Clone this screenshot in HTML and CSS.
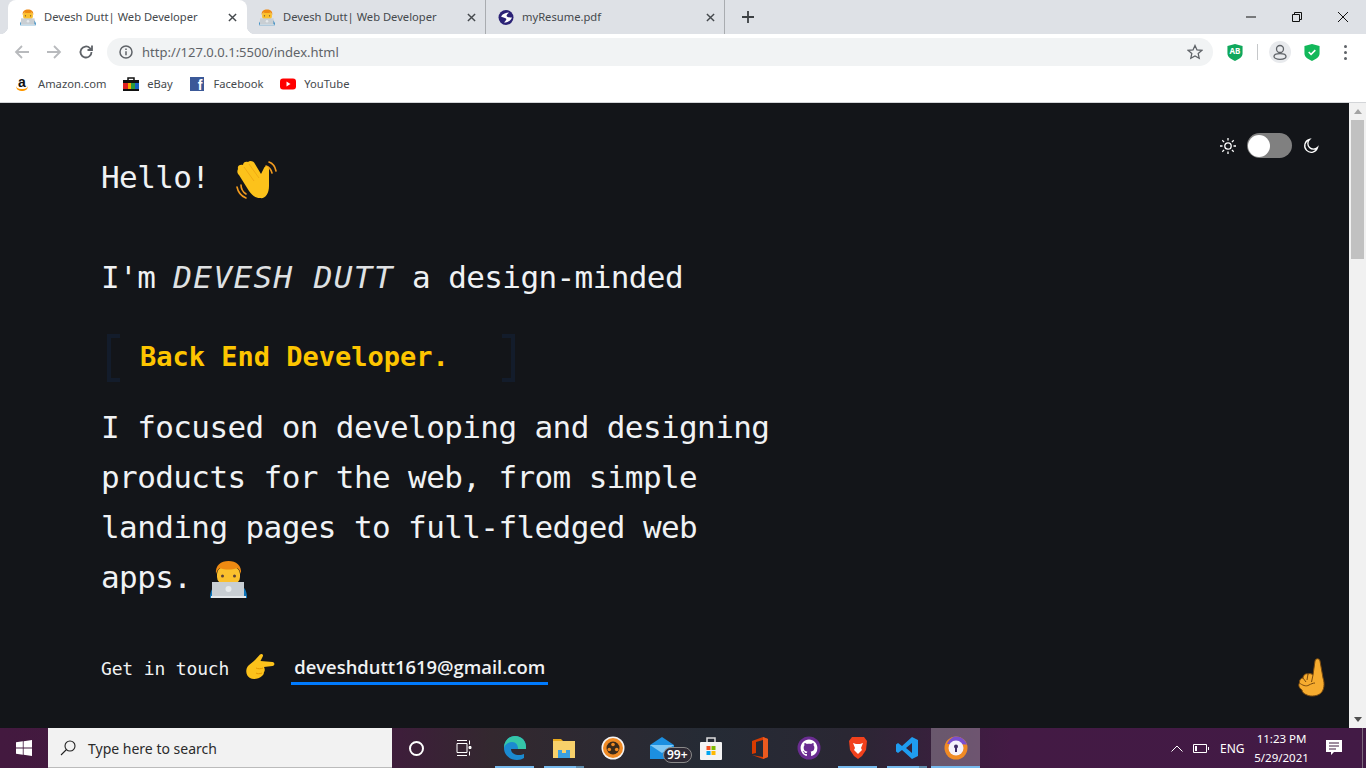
FILE: index.html
```html
<!DOCTYPE html>
<html lang="en">
<head>
<meta charset="UTF-8">
<meta name="viewport" content="width=device-width, initial-scale=1.0">
<title>Devesh Dutt| Web Developer</title>
<link rel="stylesheet" href="styles.css">
</head>
<body>

<svg class="defs" width="0" height="0">
    <symbol id="dev" viewBox="0 0 37 40">
        <path d="M0 38c0-6 2-10 5-12h27c3 2 5 6 5 12z" fill="#0d74b8"/>
        <rect x="7" y="7" width="23" height="17" rx="7" fill="#fbc02d"/>
        <path d="M6 14C5 5 11 1 18.500 1S32 5 31 14c-1-3-2-5-4-6-5 2-12 2-17 0-2 1-3 3-4 6z" fill="#ee8a12"/>
        <circle cx="12.500" cy="16" r="1.500" fill="#5d4037"/>
        <circle cx="24.500" cy="16" r="1.500" fill="#5d4037"/>
        <rect x="2" y="22" width="32" height="15" fill="#c8ced3"/>
        <rect x="1" y="36" width="35" height="2" fill="#e3e7ea"/>
        <circle cx="18.500" cy="29" r="3" fill="#e6eaed"/>
    </symbol>
    <symbol id="wave" viewBox="0 0 42 40">
        <g fill="none" stroke="#f19a1f" stroke-width="1.600" stroke-linecap="round">
            <path d="M31 6c3 1 5 3 6 7"/>
            <path d="M34 2c3 1 6 4 7 9"/>
            <path d="M6 25c0 4 2 7 5 9"/>
            <path d="M2 27c1 5 4 9 9 11"/>
        </g>
        <path d="M3 9c-1-3 2-5 5-4 0-3 3-4 5-3 2-2 6-1 7 2l6 10 3-6c1-3 5-2 5 1l0 17c0 8-4 13-9 12-5 0-8-3-11-7L4 15c-2-2-2-4-1-6z" fill="#fcc21b"/>
        <path d="M9 7l10 14M14 4l10 14" stroke="#eda512" stroke-width=".8" fill="none"/>
    </symbol>
    <symbol id="point" viewBox="0 0 30 27">
        <path d="M3 13c2-2 5-4 7-6l5-5.500c2-1.500 4 .5 2.500 2.500l-2 4 12 1c2.500.5 2.500 3.500 0 4L19 14c1 2 1 4 0 5 0 2-1 3-2 4-3 3-9 4-12 2-4-2-5-8-2-12z" fill="#fcc21b"/>
        <path d="M18 15c-2 1-5 1-7 0M17 20c-2 1-5 1-6 0" stroke="#e59600" stroke-width="1" fill="none"/>
    </symbol>
    <symbol id="up" viewBox="0 0 28 39">
        <path d="M15 17l2-14c.5-3 4.500-3 5 0l3 17c2 6 1 12-2 15s-10 4-14 2c-3-1-5-3-5-5-3-2-4-5-2.500-7C1 22 3 20 5 20c0-3 3-5 5-4 2-1 4 0 5 1z" fill="#f7ac2f" stroke="#7a4a0e" stroke-width="1"/>
        <path d="M15 17l-1.500 7M10 16l-1 6M5 20l3 4M1.500 25c2.500 2 6.500 4 9.500 2 2-1 4-2 6-2" fill="none" stroke="#7a4a0e" stroke-width="1"/>
    </symbol>
</svg>

<div class="tabstrip">
    <div class="tab tab-active">
        <svg class="favicon"><use href="#dev"/></svg>
        <span class="tab-title">Devesh Dutt| Web Developer</span>
        <svg class="tab-close" viewBox="0 0 10 10"><path d="M1 1l8 8M9 1l-8 8"/></svg>
    </div>
    <div class="tab">
        <svg class="favicon"><use href="#dev"/></svg>
        <span class="tab-title">Devesh Dutt| Web Developer</span>
        <svg class="tab-close" viewBox="0 0 10 10"><path d="M1 1l8 8M9 1l-8 8"/></svg>
    </div>
    <div class="tab">
        <svg class="favicon" viewBox="0 0 16 16">
            <circle cx="8" cy="8" r="7.500" fill="#2b2276"/>
            <path d="M3 7c2-3 5-4 8-4-2 2-3 3-2 4s4 1 5 1c-1 3-4 5-8 5 2-2 3-3 2-4S4 8 3 7z" fill="#fff"/>
        </svg>
        <span class="tab-title">myResume.pdf</span>
        <svg class="tab-close" viewBox="0 0 10 10"><path d="M1 1l8 8M9 1l-8 8"/></svg>
    </div>
    <svg class="new-tab" viewBox="0 0 12 12"><path d="M6 0v12M0 6h12"/></svg>
    <div class="window-controls">
        <span class="win-btn"><svg viewBox="0 0 10 10"><path d="M0 5h10"/></svg></span>
        <span class="win-btn"><svg viewBox="0 0 10 10"><path d="M.5 2.500h7v7h-7zM2.500 2.500v-2h7v7h-2"/></svg></span>
        <span class="win-btn"><svg viewBox="0 0 10 10"><path d="M0 0l10 10M10 0L0 10"/></svg></span>
    </div>
</div>

<div class="toolbar">
    <span class="tool-btn"><svg viewBox="0 0 16 16" class="ico-off"><path d="M15 8H2M8 2L2 8l6 6"/></svg></span>
    <span class="tool-btn"><svg viewBox="0 0 16 16" class="ico-off"><path d="M1 8h13M8 2l6 6-6 6"/></svg></span>
    <span class="tool-btn"><svg viewBox="0 0 16 16" class="ico-on"><path d="M13.500 8a5.500 5.500 0 1 1-1.600-3.900L14 6M14 1.500V6H9.500"/></svg></span>
    <div class="omnibox">
        <svg class="info-icon" viewBox="0 0 14 14"><circle cx="7" cy="7" r="6"/><path d="M7 6.200v4M7 3.500v1.500"/></svg>
        <span class="url">http://127.0.0.1:5500/index.html</span>
        <svg class="star-icon" viewBox="0 0 16 16"><path d="M8 1.500l2 4.400 4.800.5-3.600 3.200 1 4.700L8 12l-4.200 2.300 1-4.700L1.200 6.400 6 5.900z"/></svg>
    </div>
    <span class="tool-btn tool-first">
        <svg viewBox="0 0 16 18" class="ext"><path d="M0 2l8-2 8 2v8c0 4-4 6-8 8-4-2-8-4-8-8z" fill="#10a85c"/></svg>
        <span class="ext-text">AB</span>
    </span>
    <span class="tool-sep"></span>
    <span class="tool-btn"><span class="avatar">
        <svg viewBox="0 0 16 16" class="ico-on"><circle cx="8" cy="5" r="3.500"/><ellipse cx="8" cy="12.500" rx="6" ry="2.800"/></svg>
    </span></span>
    <span class="tool-btn">
        <svg viewBox="0 0 16 18" class="ext"><path d="M0 2l8-2 8 2v8c0 4-4 6-8 8-4-2-8-4-8-8z" fill="#12b85a"/><path d="M4.500 8.500l2.500 2.500 4.500-4.500" fill="none" stroke="#fff" stroke-width="1.600"/></svg>
    </span>
    <span class="tool-btn tool-menu"><span class="dots"><i></i><i></i><i></i></span></span>
</div>

<div class="bookmarks">
    <span class="bookmark">
        <span class="fav-amazon">a</span>
        Amazon.com
    </span>
    <span class="bookmark">
        <svg viewBox="0 0 16 16">
            <path d="M5 5V2h6v3" fill="none" stroke="#111" stroke-width="1.500"/>
            <rect y="4" width="16" height="3" fill="#111"/>
            <rect y="7" width="5" height="6" fill="#e02020"/>
            <rect x="5" y="7" width="3" height="6" fill="#f5a800"/>
            <rect x="8" y="7" width="4" height="6" fill="#2b9b3f"/>
            <rect x="12" y="7" width="4" height="6" fill="#1762c4"/>
            <rect y="13" width="16" height="2" fill="#111"/>
        </svg>
        eBay
    </span>
    <span class="bookmark">
        <span class="fav-facebook">f</span>
        Facebook
    </span>
    <span class="bookmark">
        <svg viewBox="0 0 16 16"><rect y="2.500" width="16" height="11" rx="3" fill="#f00"/><path d="M6.500 5.500l4 2.500-4 2.500z" fill="#fff"/></svg>
        YouTube
    </span>
</div>

<div class="viewport">
    <main class="page">
        <div class="theme-switch">
            <svg class="theme-icon" viewBox="0 0 16 16"><circle cx="8" cy="8" r="3.200"/><path d="M8 0v2.500M8 13.500V16M0 8h2.500M13.500 8H16M2.300 2.300l1.800 1.800M11.900 11.900l1.800 1.800M2.300 13.700l1.800-1.800M11.900 4.100l1.800-1.800"/></svg>
            <span class="switch-track"><span class="switch-knob"></span></span>
            <svg class="theme-icon" viewBox="0 0 16 16"><path d="M6.500 1.500a6.500 6.500 0 1 0 8 8 5.500 5.500 0 0 1-8-8z"/></svg>
        </div>

        <h1 class="line hello">Hello! <svg class="emoji-wave"><use href="#wave"/></svg></h1>
        <p class="line intro">I'm <em>DEVESH DUTT</em> a design-minded</p>
        <div class="role">
            <span class="bracket bracket-left"></span>
            <span class="role-text">Back End Developer.</span>
            <span class="bracket bracket-right"></span>
        </div>
        <p class="line about">I focused on developing and designing<br>products for the web, from simple<br>landing pages to full-fledged web<br>apps. <svg class="emoji-dev"><use href="#dev"/></svg></p>
        <div class="contact">
            <span class="contact-label">Get in touch</span>
            <svg class="emoji-point"><use href="#point"/></svg>
            <a class="email" href="#">deveshdutt1619@gmail.com</a>
        </div>

        <svg class="emoji-up"><use href="#up"/></svg>
    </main>
    <div class="scrollbar">
        <span class="arrow arrow-up"></span>
        <span class="thumb"></span>
        <span class="arrow arrow-down"></span>
    </div>
</div>

<footer class="taskbar">
    <span class="start">
        <svg viewBox="0 0 16 16"><path d="M0 2.300l6.800-1v6.300H0zM7.600 1.200L16 0v7.600H7.600zM0 8.400h6.800v6.300L0 13.700zM7.600 8.400H16V16l-8.400-1.200z" fill="#fff"/></svg>
    </span>
    <div class="search">
        <svg viewBox="0 0 16 16"><circle cx="10" cy="6" r="5"/><path d="M6.500 9.500L1 15"/></svg>
        <span>Type here to search</span>
    </div>
    <span class="task-item"><span class="cortana"></span></span>
    <span class="task-item">
        <svg viewBox="0 0 16 16" class="taskview"><path d="M1 3.500h10v9H1zM1 .5h10M1 15.500h10M13.500.5v4M13.500 11.500v4"/><path d="M13 6.500h2v2h-2z" fill="#fff"/></svg>
    </span>
    <span class="task-item task-open">
        <svg viewBox="0 0 24 24">
            <path d="M1 12C1 5 6 0 12 0c7 0 11 5 11 11v2H8c0 4 4 6 8 6 2 0 4-.5 5-1v4c-2 1-4 2-7 2C7 24 1 19 1 12z" fill="#1b8ad0"/>
            <path d="M1 12c1-4 5-6 8-6 4 0 6 3 6 7h8v-2C23 5 19 0 12 0 6 0 1 5 1 12z" fill="#35c6a8"/>
        </svg>
    </span>
    <span class="task-item task-open task-stacked">
        <svg viewBox="0 0 24 24">
            <path d="M1 3h8l2 2H1z" fill="#e8a91c"/>
            <rect x="1" y="5" width="22" height="17" fill="#f7d06a"/>
            <rect x="6" y="14" width="12" height="8" fill="#3aa0e0"/>
            <rect x="10" y="14" width="4" height="3" fill="#f7d06a"/>
        </svg>
    </span>
    <span class="task-item">
        <svg viewBox="0 0 24 24">
            <circle cx="12" cy="12" r="11.500" fill="#f5f5f5"/>
            <circle cx="12" cy="12" r="10" fill="#f08a24"/>
            <circle cx="12" cy="12" r="6.500" fill="#3b2a1a"/>
            <circle cx="12" cy="8.500" r="1.800" fill="#f08a24"/>
            <circle cx="8.300" cy="13.500" r="1.800" fill="#f08a24"/>
            <circle cx="15.700" cy="13.500" r="1.800" fill="#f08a24"/>
        </svg>
    </span>
    <span class="task-item">
        <svg viewBox="0 0 24 24">
            <path d="M0 9l12-8 12 8v14H0z" fill="#1c8fe0"/>
            <path d="M0 9h24L12 17z" fill="#7fc8f5"/>
        </svg>
        <span class="mail-badge">99+</span>
    </span>
    <span class="task-item">
        <svg viewBox="0 0 24 24">
            <path d="M8 6V2h8v4" fill="none" stroke="#ddd" stroke-width="1.500"/>
            <rect x="1" y="6" width="22" height="18" rx="1" fill="#f3f3f3"/>
            <rect x="7.500" y="10" width="4" height="4" fill="#f25022"/>
            <rect x="12.500" y="10" width="4" height="4" fill="#7fba00"/>
            <rect x="7.500" y="15" width="4" height="4" fill="#00a4ef"/>
            <rect x="12.500" y="15" width="4" height="4" fill="#ffb900"/>
        </svg>
    </span>
    <span class="task-item">
        <svg viewBox="0 0 24 24">
            <path d="M4 5l11-4 5 2v18l-5 2-11-4 11 2V4L8 6v11l-4 1z" fill="#d83b01"/>
            <path d="M15 1l5 2v18l-5 2z" fill="#eb5a1f"/>
        </svg>
    </span>
    <span class="task-item">
        <svg viewBox="0 0 24 24">
            <circle cx="12" cy="12" r="11.500" fill="#6a2c91"/>
            <path transform="translate(3.600 3.600) scale(1.050)" fill="#fff" d="M8 0C3.580 0 0 3.580 0 8c0 3.540 2.290 6.530 5.470 7.590.4.070.55-.17.55-.38 0-.19-.01-.82-.01-1.490-2.010.37-2.530-.49-2.690-.94-.09-.23-.48-.94-.82-1.130-.28-.15-.68-.52-.01-.53.63-.01 1.080.58 1.230.82.72 1.210 1.870.87 2.330.66.07-.52.28-.87.51-1.070-1.780-.2-3.640-.89-3.640-3.950 0-.87.31-1.590.82-2.150-.08-.2-.36-1.020.08-2.120 0 0 .67-.21 2.200.82.64-.18 1.320-.27 2-.27s1.360.09 2 .27c1.530-1.040 2.200-.82 2.200-.82.44 1.100.16 1.920.08 2.120.51.56.82 1.270.82 2.150 0 3.070-1.870 3.750-3.650 3.950.29.25.54.73.54 1.480 0 1.070-.01 1.930-.01 2.200 0 .21.15.46.55.38A8.013 8.013 0 0 0 16 8c0-4.420-3.580-8-8-8z"/>
        </svg>
    </span>
    <span class="task-item task-open">
        <svg viewBox="0 0 24 24">
            <path d="M6 1h12l3 4-1 9-4 6-4 3-4-3-4-6-1-9z" fill="#f1411c"/>
            <path d="M7 7l3 1h4l3-1-2 5 1 2-4 4-4-4 1-2z" fill="#fff"/>
        </svg>
    </span>
    <span class="task-item task-open task-stacked">
        <svg viewBox="0 0 24 24">
            <path d="M17 1l6 3v16l-6 3-10-9-4 3-2-1.500v-7L3 7l4 3zM17 7l-6 5 6 5z" fill="#1f9cf0"/>
        </svg>
    </span>
    <span class="task-item task-open task-active">
        <svg viewBox="0 0 24 24">
            <circle cx="12" cy="12" r="11.500" fill="#f08a24"/>
            <path d="M3 8C5 3 9 .5 12 .5c5 0 9 3 11 8z" fill="#7a4fd0"/>
            <circle cx="12" cy="12" r="7.500" fill="#f4f0fa"/>
            <circle cx="12" cy="10.500" r="2" fill="#3d2a66"/>
            <rect x="11" y="11" width="2" height="5" fill="#3d2a66"/>
        </svg>
    </span>

    <div class="tray">
        <svg class="tray-chevron" viewBox="0 0 12 7"><path d="M.5 6.500L6 1l5.500 5.500"/></svg>
        <svg class="tray-battery" viewBox="0 0 16 9"><path d="M.5 .5h13v8H.5zM15.500 3v3"/><path d="M2 2h2v5H2z" fill="#fff" stroke="none"/></svg>
        <span class="tray-lang">ENG</span>
        <span class="clock">11:23 PM<br>5/29/2021</span>
        <svg class="tray-notify" viewBox="0 0 16 16">
            <path d="M0 0h16v12H8l-3 3v-3H0z" fill="#fff"/>
            <path d="M3 3h10M3 6h10M3 9h7" stroke="#3f1a3e" stroke-width="1"/>
        </svg>
        <span class="show-desktop"></span>
    </div>
</footer>

</body>
</html>
```

FILE: styles.css
```css
html, body {
    margin: 0;
    height: 768px;
    overflow: hidden;
}
body {
    display: flex;
    flex-direction: column;
    font-family: "Noto Sans", Arial, sans-serif;
}
.defs {
    position: absolute;
}

/* tab strip */
.tabstrip {
    display: flex;
    align-items: center;
    flex: 0 0 34px;
    padding-left: 8px;
    background-color: #dee1e6;
}
.tab {
    display: flex;
    align-items: center;
    position: relative;
    box-sizing: border-box;
    width: 239px;
    height: 34px;
    padding: 0 9px 0 12px;
    border-right: 1px solid #a9acb0;
    background-clip: padding-box;
}
.tab .tab-title {
    margin-top: -1px;
    font-size: 11.200px;
    color: #45494d;
}
.tab-active {
    padding-right: 10px;
    border-right: none;
    border-radius: 8px 8px 0 0;
    background-color: #fff;
}
.tab-active::before, .tab-active::after {
    content: "";
    position: absolute;
    bottom: 0;
    width: 8px;
    height: 8px;
    background: radial-gradient(circle at 0 0, #dee1e6 8px, #fff 8.5px);
}
.tab-active::before {
    left: -8px;
}
.tab-active::after {
    right: -8px;
    background: radial-gradient(circle at 100% 0, #dee1e6 8px, #fff 8.5px);
}
.favicon {
    flex: none;
    width: 16px;
    height: 17px;
    margin-right: 8px;
}
.tab-close {
    width: 9px;
    height: 9px;
    margin-left: auto;
    fill: none;
    stroke: #45494d;
    stroke-width: 1.6;
}
.new-tab {
    width: 12px;
    height: 12px;
    margin-left: 17px;
    fill: none;
    stroke: #3c4043;
    stroke-width: 1.8;
}
.window-controls {
    display: flex;
    margin-left: auto;
}
.win-btn {
    display: flex;
    align-items: center;
    justify-content: center;
    width: 46px;
    height: 30px;
}
.win-btn svg {
    width: 10px;
    height: 10px;
    fill: none;
    stroke: #111;
    stroke-width: 1;
}

/* toolbar */
.toolbar {
    display: flex;
    align-items: center;
    box-sizing: border-box;
    flex: 0 0 34px;
    padding: 2px 5px 0 6px;
    background-color: #fff;
}
.tool-btn {
    display: flex;
    align-items: center;
    justify-content: center;
    position: relative;
    flex: none;
    width: 32px;
    height: 32px;
}
.tool-btn svg {
    width: 16px;
    height: 16px;
    fill: none;
}
.ico-off {
    stroke: #b8babd;
    stroke-width: 1.8;
}
.ico-on {
    stroke: #5f6368;
    stroke-width: 1.8;
}
.tool-btn .ext {
    height: 17px;
}
.ext-text {
    position: absolute;
    top: 10px;
    left: 0;
    width: 32px;
    font-size: 8px;
    font-weight: 700;
    line-height: 10px;
    color: #fff;
    text-align: center;
}
.tool-first {
    margin-left: 6px;
}
.tool-menu {
    margin-left: 1px;
}
.tool-sep {
    flex: none;
    width: 1px;
    height: 16px;
    margin: 0 6px;
    background-color: #c6c8ca;
}
.avatar {
    display: flex;
    align-items: center;
    justify-content: center;
    width: 22px;
    height: 22px;
    border-radius: 50%;
    background-color: #e8eaed;
}
.avatar svg {
    stroke-width: 1.300;
}
.dots {
    display: flex;
    flex-direction: column;
    gap: 3px;
}
.dots i {
    width: 3px;
    height: 3px;
    border-radius: 50%;
    background-color: #5f6368;
}
.omnibox {
    display: flex;
    align-items: center;
    flex: 1;
    height: 28px;
    margin-left: 5px;
    padding: 0 10px 0 12px;
    border-radius: 14px;
    background-color: #f1f3f4;
}
.info-icon {
    width: 14px;
    height: 14px;
    fill: none;
    stroke: #5f6368;
    stroke-width: 1.500;
}
.url {
    margin-left: 9px;
    font-size: 13px;
    color: #5f6368;
}
.star-icon {
    width: 16px;
    height: 16px;
    margin-left: auto;
    fill: none;
    stroke: #5f6368;
    stroke-width: 1.300;
}

/* bookmarks */
.bookmarks {
    display: flex;
    align-items: center;
    gap: 16.700px;
    box-sizing: border-box;
    flex: 0 0 35px;
    padding: 0 0 3px 14px;
    border-bottom: 1px solid #d3d5d8;
    background-color: #fff;
}
.bookmark {
    display: flex;
    align-items: center;
    gap: 8px;
    font-size: 11.200px;
    color: #45494d;
}
.bookmark svg {
    width: 16px;
    height: 16px;
}
.fav-amazon {
    position: relative;
    width: 16px;
    height: 18px;
    font-family: "Liberation Sans", sans-serif;
    font-size: 14px;
    font-weight: 700;
    line-height: 15px;
    color: #111;
    text-align: center;
}
.fav-amazon::after {
    content: "";
    position: absolute;
    left: 2px;
    right: 2px;
    bottom: 2px;
    height: 3px;
    border-bottom: 2px solid #f90;
    border-radius: 0 0 8px 8px;
}
.fav-facebook {
    box-sizing: border-box;
    width: 14px;
    height: 14px;
    margin: 0 1px;
    padding-right: 2px;
    background-color: #3b5998;
    font-family: "Liberation Sans", sans-serif;
    font-size: 14px;
    font-weight: 700;
    line-height: 16px;
    color: #fff;
    text-align: right;
}

/* page */
.viewport {
    display: flex;
    flex: 1;
    min-height: 0;
}
.page {
    position: relative;
    flex: 1;
    padding: 49px 0 0 101px;
    background-color: #131519;
    color: #f0f2f4;
    font-family: "DejaVu Sans Mono", monospace;
}
.line {
    margin: 0;
    font-size: 31px;
    font-weight: 400;
    line-height: 50px;
    letter-spacing: -.6px;
}
.intro {
    margin-top: 50px;
}
.intro em {
    letter-spacing: 1.400px;
    color: #dfe1e3;
}
.about {
    margin-top: 19px;
}
.hello svg, .about svg {
    vertical-align: middle;
}
.emoji-wave {
    width: 42px;
    height: 40px;
    margin-left: 8px;
}
.emoji-dev {
    width: 37px;
    height: 40px;
    margin-left: 1px;
}
.role {
    display: flex;
    align-items: center;
    justify-content: space-between;
    width: 408px;
    height: 50px;
    margin: 31px 0 0 6px;
}
.role-text {
    margin: -3px auto 0 20px;
    font-size: 27px;
    font-weight: 700;
    color: #fdc500;
}
.bracket {
    box-sizing: border-box;
    width: 13px;
    height: 48px;
    border: 4px solid #131c2b;
}
.bracket-left {
    border-right: none;
}
.bracket-right {
    border-left: none;
}
.contact {
    display: flex;
    align-items: center;
    height: 30px;
    margin-top: 51px;
    font-size: 18px;
}
.contact-label {
    letter-spacing: -.15px;
}
.emoji-point {
    width: 30px;
    height: 27px;
    margin: -4px 0 0 16px;
}
.email {
    margin-left: 16px;
    padding: 3px 3px;
    border-bottom: 3px solid #007bff;
    font-family: "Open Sans", sans-serif;
    font-size: 18.400px;
    font-weight: 600;
    color: #f0f2f4;
    text-decoration: none;
}
.theme-switch {
    display: flex;
    align-items: center;
    position: absolute;
    top: 30px;
    right: 30px;
    gap: 11px;
}
.theme-icon {
    width: 16px;
    height: 16px;
    fill: none;
    stroke: #fff;
    stroke-width: 1.300;
}
.switch-track {
    display: flex;
    align-items: center;
    width: 45px;
    height: 25px;
    border-radius: 13px;
    background-color: #808080;
}
.switch-knob {
    width: 22px;
    height: 22px;
    margin-left: 1px;
    border-radius: 50%;
    background-color: #fff;
}
.emoji-up {
    position: absolute;
    right: 23px;
    bottom: 31px;
    width: 28px;
    height: 39px;
}

/* scrollbar */
.scrollbar {
    display: flex;
    flex-direction: column;
    align-items: center;
    flex: 0 0 17px;
    background-color: #f1f1f1;
}
.arrow {
    width: 0;
    height: 0;
    border-right: 4px solid transparent;
    border-left: 4px solid transparent;
}
.arrow-up {
    margin-top: 6px;
    border-bottom: 5px solid #a3a3a3;
}
.arrow-down {
    margin-top: auto;
    margin-bottom: 6px;
    border-top: 5px solid #505050;
}
.thumb {
    width: 13px;
    height: 139px;
    margin-top: 6px;
    background-color: #c1c1c1;
}

/* windows taskbar */
.taskbar {
    display: flex;
    align-items: center;
    flex: 0 0 40px;
    background: linear-gradient(90deg, #43193f 0, #3f1c3c 28%, #33282f 36%, #252b35 52%, #2a2733 62%, #431a44 74%, #421a45 100%);
}
.start {
    display: flex;
    align-items: center;
    justify-content: center;
    flex: none;
    width: 48px;
    height: 40px;
}
.start svg {
    width: 16px;
    height: 16px;
}
.search {
    display: flex;
    align-items: center;
    flex: none;
    box-sizing: border-box;
    width: 344px;
    height: 40px;
    padding: 1px 0 0 12px;
    border-bottom: 1px solid #bbb;
    background-color: #f2f2f2;
    font-size: 14px;
    color: #2b2b2b;
}
.search svg {
    width: 16px;
    height: 16px;
    margin-right: 12px;
    fill: none;
    stroke: #222;
    stroke-width: 1.100;
}
.task-item {
    display: flex;
    align-items: center;
    justify-content: center;
    position: relative;
    box-sizing: border-box;
    flex: none;
    width: 49px;
    height: 40px;
}
.task-item svg {
    width: 24px;
    height: 24px;
}
.cortana {
    box-sizing: border-box;
    width: 15px;
    height: 15px;
    border: 2px solid #fff;
    border-radius: 50%;
}
.task-item .taskview {
    width: 16px;
    height: 16px;
    margin-right: 3px;
    fill: none;
    stroke: #fff;
    stroke-width: 1;
}
.task-open::after {
    content: "";
    position: absolute;
    bottom: 0;
    left: 5px;
    right: 5px;
    height: 2px;
    background-color: #76b9ed;
}
.task-stacked::after {
    right: 4px;
    background: linear-gradient(90deg, #76b9ed 80%, #5e8bab 80%);
}
.task-active {
    background-color: rgba(255, 255, 255, .25);
}
.task-active::after {
    left: 0;
    right: 0;
}
.mail-badge {
    position: absolute;
    top: 19px;
    left: 26px;
    padding: 0 3px;
    border: 1px solid #8a8a8a;
    border-radius: 9px;
    background-color: #2e2a35;
    font-size: 12px;
    font-weight: 600;
    line-height: 14px;
    color: #fff;
}

/* tray */
.tray {
    display: flex;
    align-items: center;
    flex: 1;
    padding-left: 191px;
    color: #fff;
}
.tray-chevron {
    width: 12px;
    height: 7px;
    fill: none;
    stroke: #fff;
}
.tray-battery {
    width: 16px;
    height: 9px;
    margin-left: 10px;
    fill: none;
    stroke: #fff;
}
.tray-lang {
    margin-left: 11px;
    font-size: 12px;
}
.clock {
    width: 60px;
    margin-left: 7px;
    font-size: 11.500px;
    line-height: 19px;
    text-align: center;
}
.tray-notify {
    width: 16px;
    height: 16px;
    margin-left: 14px;
}
.show-desktop {
    width: 1px;
    height: 40px;
    margin-left: 20px;
    background-color: #7d6a7d;
}
```
